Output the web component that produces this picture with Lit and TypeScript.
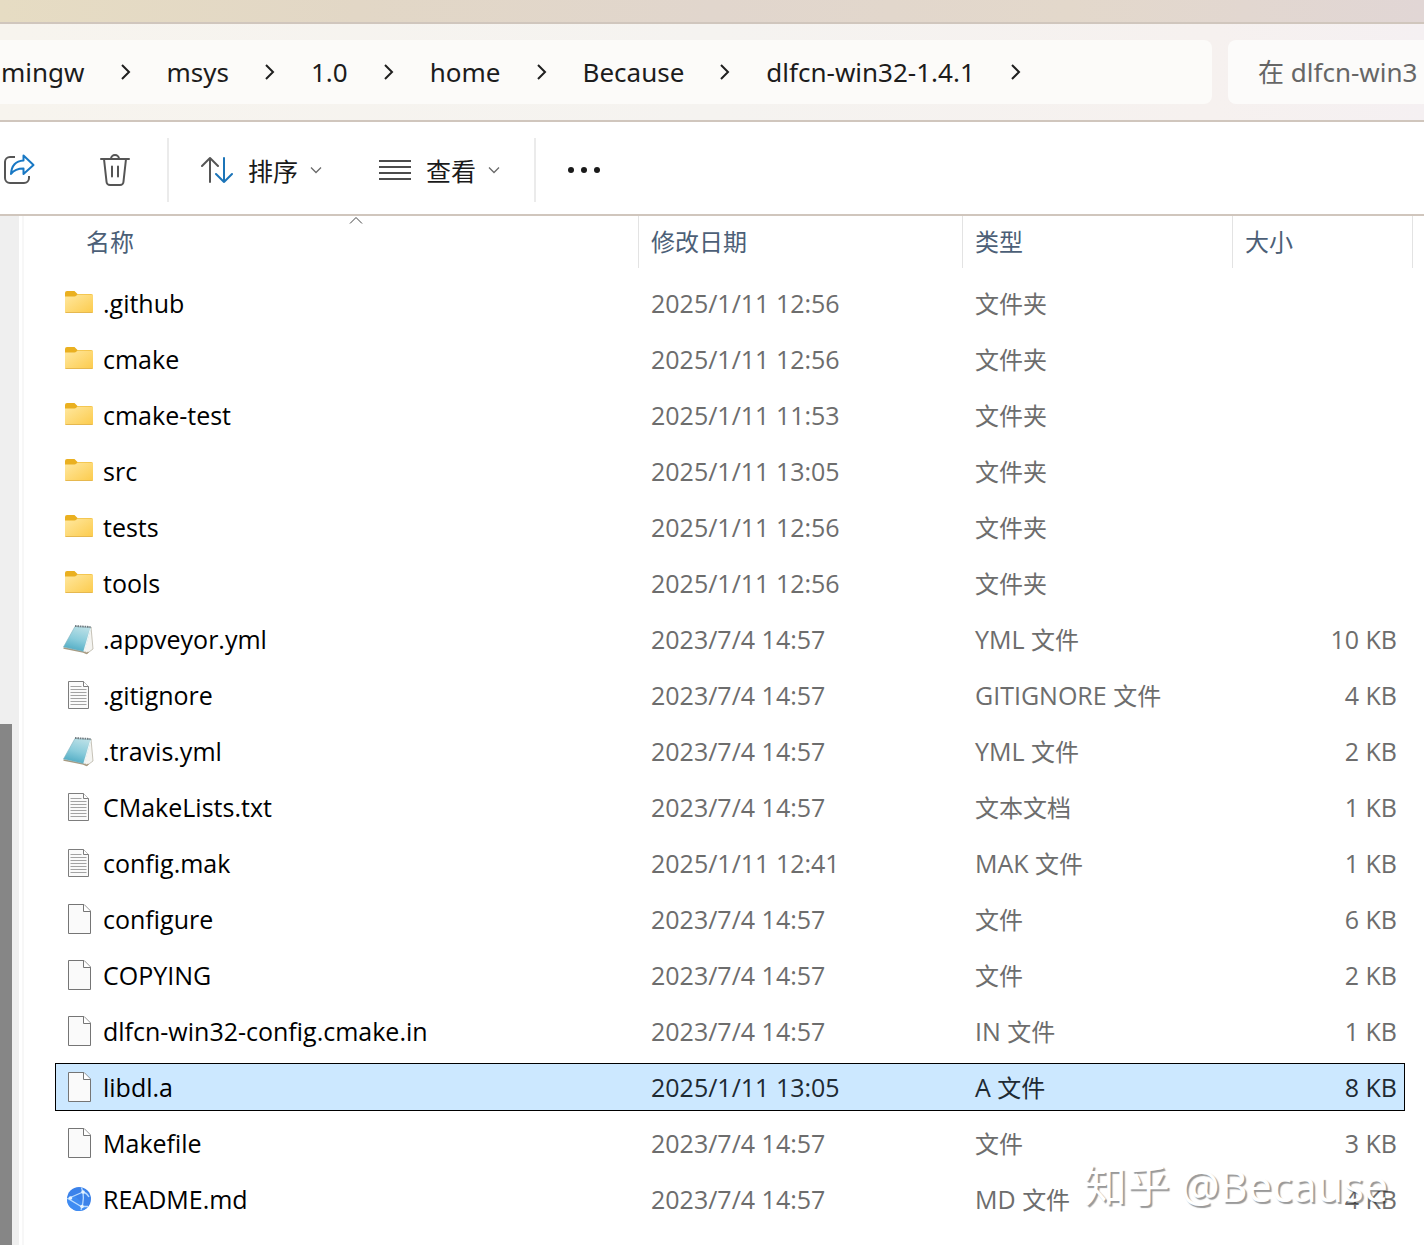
import { LitElement, html, css, svg, nothing } from "lit";
import { customElement, property } from "lit/decorators.js";
import { classMap } from "lit/directives/class-map.js";

type Kind = "folder" | "notepad" | "text" | "blank" | "web";

interface Entry {
  name: string;
  kind: Kind;
  modified: string;
  type: string;
  size?: string;
}

const CRUMBS = ["mingw", "msys", "1.0", "home", "Because", "dlfcn-win32-1.4.1"];

const ENTRIES: Entry[] = [
  { name: ".github", kind: "folder", modified: "2025/1/11 12:56", type: "文件夹" },
  { name: "cmake", kind: "folder", modified: "2025/1/11 12:56", type: "文件夹" },
  { name: "cmake-test", kind: "folder", modified: "2025/1/11 11:53", type: "文件夹" },
  { name: "src", kind: "folder", modified: "2025/1/11 13:05", type: "文件夹" },
  { name: "tests", kind: "folder", modified: "2025/1/11 12:56", type: "文件夹" },
  { name: "tools", kind: "folder", modified: "2025/1/11 12:56", type: "文件夹" },
  { name: ".appveyor.yml", kind: "notepad", modified: "2023/7/4 14:57", type: "YML 文件", size: "10 KB" },
  { name: ".gitignore", kind: "text", modified: "2023/7/4 14:57", type: "GITIGNORE 文件", size: "4 KB" },
  { name: ".travis.yml", kind: "notepad", modified: "2023/7/4 14:57", type: "YML 文件", size: "2 KB" },
  { name: "CMakeLists.txt", kind: "text", modified: "2023/7/4 14:57", type: "文本文档", size: "1 KB" },
  { name: "config.mak", kind: "text", modified: "2025/1/11 12:41", type: "MAK 文件", size: "1 KB" },
  { name: "configure", kind: "blank", modified: "2023/7/4 14:57", type: "文件", size: "6 KB" },
  { name: "COPYING", kind: "blank", modified: "2023/7/4 14:57", type: "文件", size: "2 KB" },
  { name: "dlfcn-win32-config.cmake.in", kind: "blank", modified: "2023/7/4 14:57", type: "IN 文件", size: "1 KB" },
  { name: "libdl.a", kind: "blank", modified: "2025/1/11 13:05", type: "A 文件", size: "8 KB" },
  { name: "Makefile", kind: "blank", modified: "2023/7/4 14:57", type: "文件", size: "3 KB" },
  { name: "README.md", kind: "web", modified: "2023/7/4 14:57", type: "MD 文件", size: "4 KB" },
];

const SELECTED = "libdl.a";

const ART: Record<Kind, unknown> = {
  folder: svg`
    <defs>
      <linearGradient id="f" x1="0" y1="0" x2="1" y2="1">
        <stop offset="0" stop-color="#ffe8a0" /><stop offset="1" stop-color="#fccb4c" />
      </linearGradient>
    </defs>
    <path d="M2 5a2 2 0 0 1 2-2h7.500l3 3H28a2 2 0 0 1 2 1.500V12H2z" fill="#eab020" />
    <path d="M2 8.500h9.500q1 0 2-1l1-1H29a1 1 0 0 1 1 1V24a1 1 0 0 1-1 1H3a1 1 0 0 1-1-1z" fill="url(#f)" />
    <path d="M2.500 24.500h27" stroke="#e6b84f" stroke-width="1" />`,
  notepad: svg`
    <defs>
      <linearGradient id="n" x1="0.600" y1="0" x2="0.300" y2="1">
        <stop offset="0" stop-color="#b9dfe6" /><stop offset="0.500" stop-color="#8accdb" /><stop offset="1" stop-color="#4ba9c2" />
      </linearGradient>
    </defs>
    <path d="M28 3l2 22-6 4.500-3-3z" fill="#f4f4f1" stroke="#b9b4a6" stroke-width="0.800" />
    <path d="M0.500 24l20 4 3 1.500 2-1.500" fill="none" stroke="#a89a80" stroke-width="1.400" />
    <path d="M12 2.500L27.500 3.500 20.500 27.500 0.500 23z" fill="url(#n)" stroke="#7fb0bc" stroke-width="0.600" />
    <path d="M27.500 4.500l-6.500 23" stroke="#e9f6f8" stroke-width="1.200" />
    <path d="M12 2L27.500 3" stroke="#6f7b80" stroke-width="1.800" stroke-dasharray="1.600 0.800" />`,
  text: svg`
    <path d="M5.500 1.500h15l5 5V28.500h-20z" fill="#fafafa" stroke="#7d7d7d" />
    <path d="M20.500 1.500v5h5" fill="#fff" stroke="#7d7d7d" />
    <path d="M7.500 6.500h11M7.500 9.500h16M7.500 12.500h16M7.500 15.500h16M7.500 18.500h16M7.500 21.500h16M7.500 24.500h16" stroke="#a3a3a3" />`,
  blank: svg`
    <path d="M5.500 0.500h15.500l6.500 6.500V29.500h-22z" fill="#fafafa" stroke="#757575" />
    <path d="M20.500 0.500v7h7" fill="#fff" stroke="#757575" />`,
  web: svg`
    <circle cx="16" cy="15" r="12" fill="#3b82ea" />
    <path d="M4 15a12 12 0 0 0 20 8.900L12 12z" fill="#3f8cf2" />
    <path d="M18.500 3.500q4 10-0.500 22.500M20 8L5 14.500 19 23M20 8q4 1 6 5M19 22.500l6 0" fill="none" stroke="#b9dbff" stroke-width="1.300" />
    <circle cx="20" cy="8" r="1.800" fill="#e6f3ff" />
    <circle cx="7.500" cy="14" r="1.800" fill="#e6f3ff" />
    <circle cx="19" cy="22.500" r="1.800" fill="#e6f3ff" />`,
};

const chevronRight = html`<svg class="chevron" viewBox="0 0 10 18" width="10" height="18" aria-hidden="true">
  <path d="M1 2l7 7-7 7" fill="none" stroke="#1f1f1f" stroke-width="2" />
</svg>`;

const chevronDown = html`<svg viewBox="0 0 12 8" width="12" height="8" aria-hidden="true">
  <path d="M1 1.500l5 5 5-5" fill="none" stroke="#6a6a6a" stroke-width="1.300" />
</svg>`;

@customElement("file-icon")
class FileIcon extends LitElement {
  @property() kind: Kind = "blank";

  static styles = css`
    :host {
      display: block;
      flex: none;
      width: 30px;
      height: 30px;
    }
    .art {
      display: block;
      overflow: visible;
    }
  `;

  render() {
    return html`<svg class="art" viewBox="0 0 30 30" width="30" height="30" aria-hidden="true">${ART[this.kind]}</svg>`;
  }
}

@customElement("address-bar")
class AddressBar extends LitElement {
  static styles = css`
    :host {
      display: flex;
      gap: 16px;
      padding: 16px 0;
      background: linear-gradient(90deg, #f7f4ee, #f5f3f0 50%, #f6f1ef 85%, #f5f0f2);
      border-bottom: 2px solid #d0c6bd;
      overflow: hidden;
    }
    .path {
      flex: 1;
      display: flex;
      align-items: center;
      gap: 36px;
      height: 64px;
      padding-left: 1px;
      border-radius: 0 8px 8px 0;
      background: #fcfbf9;
      font-size: 26px;
      line-height: 36px;
    }
    .crumb {
      color: #1c1c1c;
      text-decoration: none;
    }
    .chevron {
      flex: none;
    }
    .search {
      box-sizing: border-box;
      width: 196px;
      height: 64px;
      padding: 0 0 0 30px;
      border: 0;
      border-radius: 8px 0 0 8px;
      background: #fcfbfa;
      font: inherit;
      font-size: 26px;
    }
    .search::placeholder {
      color: #666;
      opacity: 1;
    }
  `;

  render() {
    return html`
      <nav class="path">
        ${CRUMBS.map((c) => html`<a class="crumb" href="#">${c}</a>${chevronRight}`)}
      </nav>
      <input class="search" type="text" placeholder="在 dlfcn-win3" aria-label="在 dlfcn-win3" />
    `;
  }
}

@customElement("command-bar")
class CommandBar extends LitElement {
  static styles = css`
    :host {
      display: flex;
      align-items: center;
      height: 88px;
      padding-top: 4px;
      background: #fff;
      border-bottom: 2px solid #d0c6bd;
    }
    .cmd {
      display: flex;
      align-items: center;
      height: 64px;
      padding: 0;
      border: 0;
      background: none;
      color: #1a1a1a;
      font: inherit;
      font-size: 25px;
      line-height: 32px;
    }
    .share {
      padding: 0 32px 0 3px;
    }
    .delete {
      padding: 0 37px 0 33px;
    }
    .menu {
      gap: 12px;
      padding: 0 27px 0 32px;
    }
    .label {
      padding: 2px 0 0 3px;
    }
    .view {
      padding-right: 34px;
      padding-left: 30px;
    }
    .more {
      padding: 0 32px;
    }
    .rule {
      width: 2px;
      height: 64px;
      background: #ebebeb;
    }
  `;

  render() {
    return html`
      <button class="cmd share" aria-label="share">
        <svg viewBox="0 0 32 32" width="32" height="32" fill="none" stroke-width="2" stroke-linejoin="round">
          <path d="M12 3H7a5 5 0 0 0-5 5v16a5 5 0 0 0 5 5h14a5 5 0 0 0 5-5v-2" stroke="#555" />
          <path d="M20.500 1.500l10 9.500-10 9v-5.500c-5 0-9.500 1.500-12.500 5.500 .5-8 5-13 12.500-13.500z" stroke="#1878c4" />
        </svg>
      </button>
      <button class="cmd delete" aria-label="delete">
        <svg viewBox="0 0 30 34" width="30" height="34" fill="none" stroke="#555" stroke-width="2" stroke-linecap="round">
          <path d="M1 6h28M11 6a4 4 0 0 1 8 0M4 6l2.500 22.500a3.500 3.500 0 0 0 3.500 3.500h10a3.500 3.500 0 0 0 3.500-3.500L26 6M12 13.500v10M18 13.500v10" />
        </svg>
      </button>
      <span class="rule"></span>
      <button class="cmd menu">
        <svg viewBox="0 0 32 28" width="32" height="28" fill="none" stroke-width="2" stroke-linecap="round" stroke-linejoin="round">
          <path d="M1 10L9 2l8 8M9 2v24" stroke="#555" />
          <path d="M15 18l8 8 8-8M23 26V2" stroke="#1b74b8" />
        </svg>
        <span class="label">排序</span>
        ${chevronDown}
      </button>
      <button class="cmd menu view">
        <svg viewBox="0 0 32 22" width="32" height="22" stroke="#4c4c4c" stroke-width="2">
          <path d="M0 2h32M0 8h32M0 14h32M0 20h32" />
        </svg>
        <span class="label">查看</span>
        ${chevronDown}
      </button>
      <span class="rule"></span>
      <button class="cmd more" aria-label="more">
        <svg viewBox="0 0 32 8" width="32" height="8" fill="#1a1a1a">
          <circle cx="3" cy="4" r="3" /><circle cx="16" cy="4" r="3" /><circle cx="29" cy="4" r="3" />
        </svg>
      </button>
    `;
  }
}

@customElement("file-list")
class FileList extends LitElement {
  static styles = css`
    :host {
      display: block;
      flex: 1;
      min-width: 0;
      padding: 0 11px 0 31px;
      background: #fff;
      color: #6d6d6d;
      font-family: "Open Sans", "Noto Sans CJK SC", sans-serif;
      font-size: 25px;
      line-height: 32px;
    }
    .table {
      width: 100%;
      table-layout: fixed;
      border-collapse: collapse;
    }
    .date {
      width: 324px;
    }
    .type {
      width: 270px;
    }
    .size {
      width: 180px;
    }
    .th {
      height: 59px;
      padding: 0;
      vertical-align: top;
      font-weight: 400;
    }
    .sort {
      box-sizing: border-box;
      display: flex;
      align-items: center;
      width: 100%;
      height: 52px;
      padding: 0 12px;
      border: 0;
      border-right: 1px solid #e3e3e3;
      background: none;
      color: #4c5f77;
      font: inherit;
      font-size: 24px;
      line-height: 32px;
    }
    .sort.first {
      position: relative;
      padding-left: 31px;
    }
    .arrow {
      position: absolute;
      top: 0;
      left: 294px;
    }
    .td {
      height: 56px;
      padding: 0;
    }
    .cell {
      box-sizing: border-box;
      display: flex;
      align-items: center;
      height: 48px;
      padding-left: 12px;
      border: solid transparent;
      border-width: 1px 0;
      white-space: nowrap;
    }
    .cell.name {
      gap: 10px;
      padding-left: 7px;
      border-left-width: 1px;
      color: #000;
    }
    .cell.end {
      justify-content: flex-end;
      margin-right: 8px;
      padding-right: 7px;
      border-right-width: 1px;
    }
    .cjk {
      font-size: 24px;
    }
    .selected .cell {
      border-color: #000;
      background: #cce8ff;
      color: #1e2a33;
    }
    .selected .cell.name {
      color: #000;
    }
  `;

  private renderType(type: string) {
    const [, latin, cjk] = type.match(/^([A-Z]* ?)(.*)$/)!;
    return html`<span>${latin}<span class="cjk">${cjk}</span></span>`;
  }

  private renderRow(e: Entry) {
    const selected = e.name === SELECTED;
    return html`
      <tr class=${classMap({ row: true, selected })} aria-selected=${selected ? "true" : nothing}>
        <td class="td"><div class="cell name"><file-icon .kind=${e.kind}></file-icon><span>${e.name}</span></div></td>
        <td class="td"><div class="cell">${e.modified}</div></td>
        <td class="td"><div class="cell">${this.renderType(e.type)}</div></td>
        <td class="td"><div class="cell end">${e.size ?? nothing}</div></td>
      </tr>
    `;
  }

  render() {
    return html`
      <table class="table">
        <colgroup>
          <col /><col class="date" /><col class="type" /><col class="size" />
        </colgroup>
        <thead>
          <tr>
            <th class="th" scope="col" aria-sort="ascending">
              <button class="sort first">
                名称
                <svg class="arrow" viewBox="0 0 14 8" width="14" height="8" aria-hidden="true">
                  <path d="M1 7.500l6-6 6 6" fill="none" stroke="#444" />
                </svg>
              </button>
            </th>
            <th class="th" scope="col"><button class="sort">修改日期</button></th>
            <th class="th" scope="col"><button class="sort">类型</button></th>
            <th class="th" scope="col"><button class="sort">大小</button></th>
          </tr>
        </thead>
        <tbody>
          ${ENTRIES.map((e) => this.renderRow(e))}
        </tbody>
      </table>
    `;
  }
}

@customElement("app-root")
class AppRoot extends LitElement {
  static styles = css`
    :host {
      position: relative;
      display: flex;
      flex-direction: column;
      min-height: 100vh;
      overflow: hidden;
      background: #fff;
      font-family: "Noto Sans", "Noto Sans CJK SC", sans-serif;
    }
    .title {
      height: 22px;
      background: linear-gradient(90deg, #e6dcc3, #e2d7c6 25%, #e1d6cd 50%, #e3d8cb 75%, #e1d6d5);
      border-bottom: 2px solid #d0c6bd;
    }
    .body {
      flex: 1;
      display: flex;
    }
    .pane {
      display: flex;
      width: 19px;
      margin-right: 3px;
      background: #efefef;
    }
    .thumb {
      width: 12px;
      margin-top: 508px;
      background: #868686;
    }
    .list {
      border-left: 2px solid #f7f7f7;
    }
    .mark {
      position: absolute;
      right: 36px;
      bottom: 33px;
      color: #fff;
      font-size: 43px;
      line-height: 52px;
      text-shadow: 2px 2px 1px rgba(0, 0, 0, 0.4);
      white-space: nowrap;
    }
  `;

  render() {
    return html`
      <div class="title"></div>
      <address-bar></address-bar>
      <command-bar></command-bar>
      <main class="body">
        <div class="pane"><div class="thumb"></div></div>
        <file-list class="list"></file-list>
      </main>
      <div class="mark">知乎 @Because</div>
    `;
  }
}
